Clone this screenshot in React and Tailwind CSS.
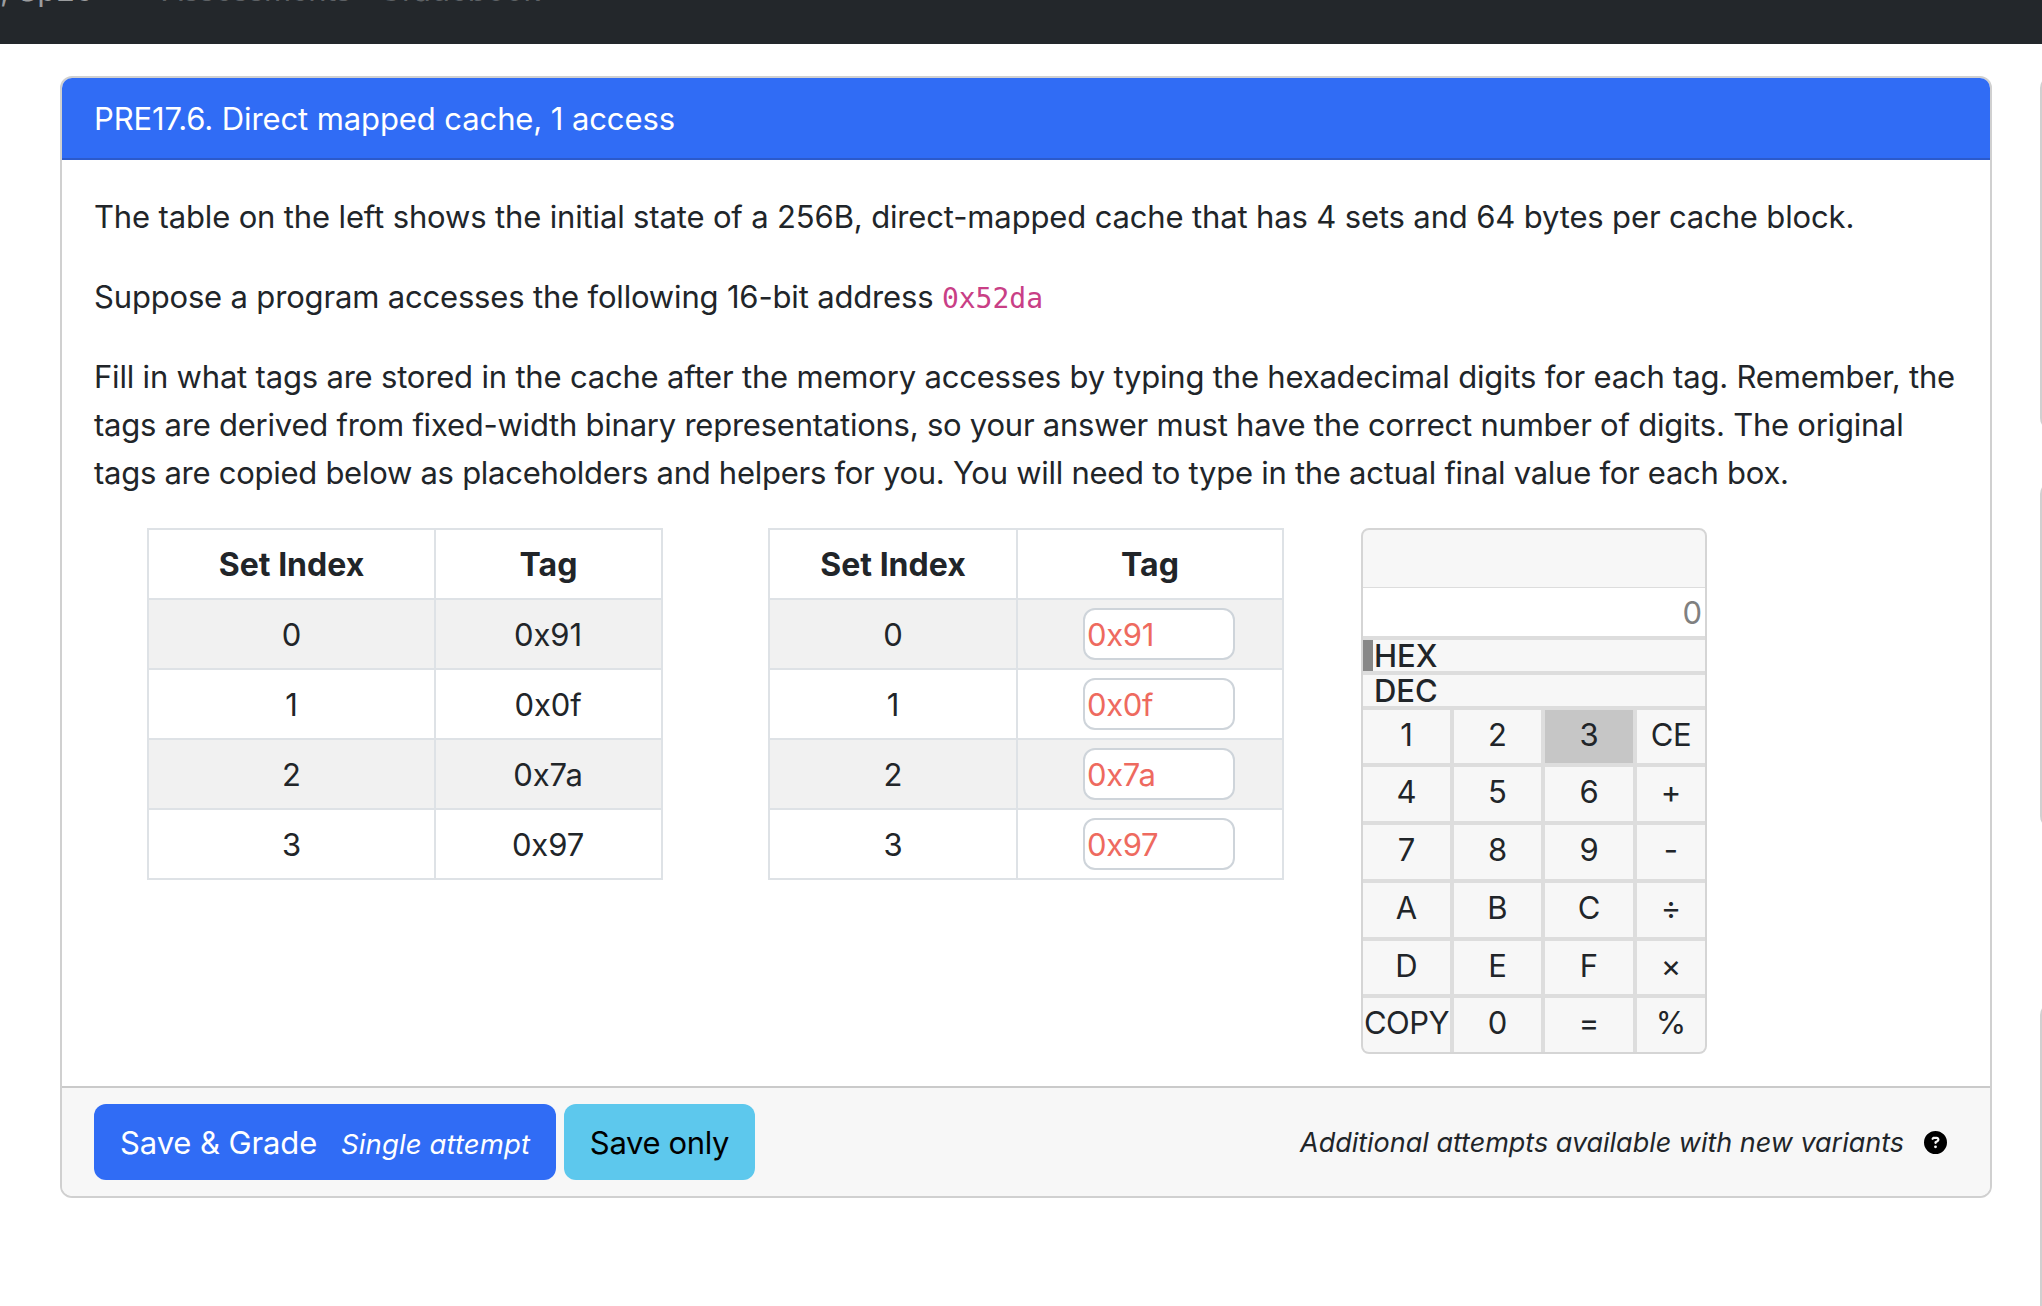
import React from "react";
import { FaCircleQuestion } from "react-icons/fa6";

const rows = [
  ["0", "0x91"],
  ["1", "0x0f"],
  ["2", "0x7a"],
  ["3", "0x97"],
];

const keys = [
  "1", "2", "3", "CE",
  "4", "5", "6", "+",
  "7", "8", "9", "-",
  "A", "B", "C", "÷",
  "D", "E", "F", "×",
  "COPY", "0", "=", "%",
];

function CacheTable({ columns, className, editable }) {
  return (
    <div
      className={`grid ${columns} auto-rows-[68px] gap-[2px] border-2 border-[#dee2e6] bg-[#dee2e6] h-[352px] text-center leading-[69px] ${className}`}
    >
      <div className="bg-white text-[32px] font-bold tracking-normal">Set Index</div>
      <div className="bg-white text-[32px] font-bold tracking-normal">Tag</div>
      {rows.map(([index, tag], i) => {
        const bg = i % 2 === 0 ? "bg-[#f1f1f1]" : "bg-white";
        return (
          <React.Fragment key={index}>
            <div className={bg}>{index}</div>
            {editable ? (
              <div className={`${bg} flex items-center pl-[65px]`}>
                <input
                  placeholder={tag}
                  className="h-[52px] w-[152px] rounded-[12px] border-2 border-[#ced4da] bg-white px-[2px] placeholder:text-[#ee6a5f] tracking-[-0.35px]"
                />
              </div>
            ) : (
              <div className={`${bg} pr-px`}>{tag}</div>
            )}
          </React.Fragment>
        );
      })}
    </div>
  );
}

function Calculator() {
  return (
    <div className="ml-[77px] w-[346px] h-[526px] flex flex-col overflow-hidden rounded-[8px] border-2 border-[#d5d5d5] bg-[#dddddd] tracking-normal">
      <div className="h-[57px] bg-[#f7f7f7]" />
      <div className="mt-px h-[48px] bg-white pr-[3px] text-right leading-[50px] text-[#808080]">0</div>
      <div className="mt-1 flex h-[31px] bg-[#f7f7f7] font-medium leading-[31px] tracking-normal">
        <span className="w-[10px] bg-[#888888]" />
        <span className="pl-[1px]">HEX</span>
      </div>
      <div className="mt-1 flex h-[31px] bg-[#f7f7f7] font-medium leading-[31px] tracking-normal">
        <span className="w-[10px]" />
        <span className="pl-[1px]">DEC</span>
      </div>
      <div className="mt-1 grid flex-1 grid-cols-[87px_87px_88px_68px] grid-rows-[53px_54px_54px_54px_53px_54px] gap-1">
        {keys.map((key) => (
          <button
            key={key}
            className={`flex items-center justify-center pb-1 ${
              key === "3" ? "bg-[#c6c6c6]" : "bg-[#f7f7f7]"
            } ${key.length > 1 ? "tracking-[-0.5px]" : ""}`}
          >
            {key}
          </button>
        ))}
      </div>
    </div>
  );
}

export default function App() {
  return (
    <div className="h-[1306px] w-[2042px] overflow-hidden bg-white font-['Inter',sans-serif] text-[31px] leading-[48px] tracking-[-0.1px] text-[#212529]">
      <nav className="flex h-[44px] overflow-hidden bg-[#23272b] leading-[32px] text-[#9b9d9f]">
        <div className="-mt-[26px] flex whitespace-nowrap">
          <span className="w-[162px]">, Sp25</span>
          <span className="w-[217px] tracking-[-0.5px] text-[#5d6165]">Assessments</span>
          <span className="tracking-[-0.1px] text-[#5d6165]">Gradebook</span>
        </div>
      </nav>

      <div className="flex pt-[32px] pl-[60px]">
        <main className="h-[1122px] w-[1932px] shrink-0 overflow-hidden rounded-[12px] border-2 border-[#d0d0d0]">
          <header className="h-[82px] border-b-2 border-[#2c5acb] bg-[#306cf5] px-[32px] pt-[17px] text-white">
            PRE17.6. Direct mapped cache, 1 access
          </header>

          <section className="h-[926px] px-[32px] pt-[33px]">
            <p className="mb-[32px] h-[48px] whitespace-nowrap tracking-[-0.145px]">
              The table on the left shows the initial state of a 256B, direct-mapped cache that has 4 sets and 64 bytes per cache block.
            </p>
            <p className="mb-[32px] h-[48px] whitespace-nowrap tracking-[-0.17px]">
              Suppose a program accesses the following 16-bit address{" "}
              <code className="font-['DejaVu_Sans_Mono',monospace] text-[28px] leading-none tracking-normal text-[#c93f86]">0x52da</code>
            </p>
            <p className="mb-[31px] whitespace-nowrap">
              <span className="block tracking-[-0.19px]">Fill in what tags are stored in the cache after the memory accesses by typing the hexadecimal digits for each tag. Remember, the</span>
              <span className="block tracking-[-0.235px]">tags are derived from fixed-width binary representations, so your answer must have the correct number of digits. The original</span>
              <span className="block tracking-[-0.27px]">tags are copied below as placeholders and helpers for you. You will need to type in the actual final value for each box.</span>
            </p>
            <div className="flex items-start">
              <CacheTable columns="grid-cols-[285px_225px]" className="ml-[53px] w-[516px]" />
              <CacheTable columns="grid-cols-[246px_264px]" className="ml-[105px] w-[516px]" editable />
              <Calculator />
            </div>
          </section>

          <footer className="flex h-[110px] items-center border-t-2 border-[#cacaca] bg-[#f7f7f7] px-[32px]">
            <button className="flex h-[76px] w-[462px] items-center whitespace-nowrap rounded-[12px] bg-[#306cf5] pt-px pl-[26px] text-white">
              <span className="w-[221px] text-left">Save &amp; Grade</span>
              <span className="pt-[3px] text-[27.5px] tracking-[0.12px] italic">Single attempt</span>
            </button>
            <button className="ml-[8px] h-[76px] w-[191px] whitespace-nowrap rounded-[12px] bg-[#5dc8ed] pt-px tracking-[-0.35px] text-black">
              Save only
            </button>
            <em className="ml-auto mr-[20px] whitespace-nowrap pt-px text-[27px] tracking-[-0.02px]">Additional attempts available with new variants</em>
            <FaCircleQuestion className="mr-[11px] size-[23px] text-black" />
          </footer>
        </main>

        <aside className="ml-[48px] w-[320px] shrink-0">
          <div className="h-[354px] rounded-[12px] border-2 border-[#d0d0d0]" />
          <div className="mt-[52px] h-[346px] rounded-[12px] border-2 border-[#d0d0d0]" />
          <div className="mt-[175px] h-[400px] rounded-[12px] border-2 border-[#d0d0d0]" />
        </aside>
      </div>
    </div>
  );
}
